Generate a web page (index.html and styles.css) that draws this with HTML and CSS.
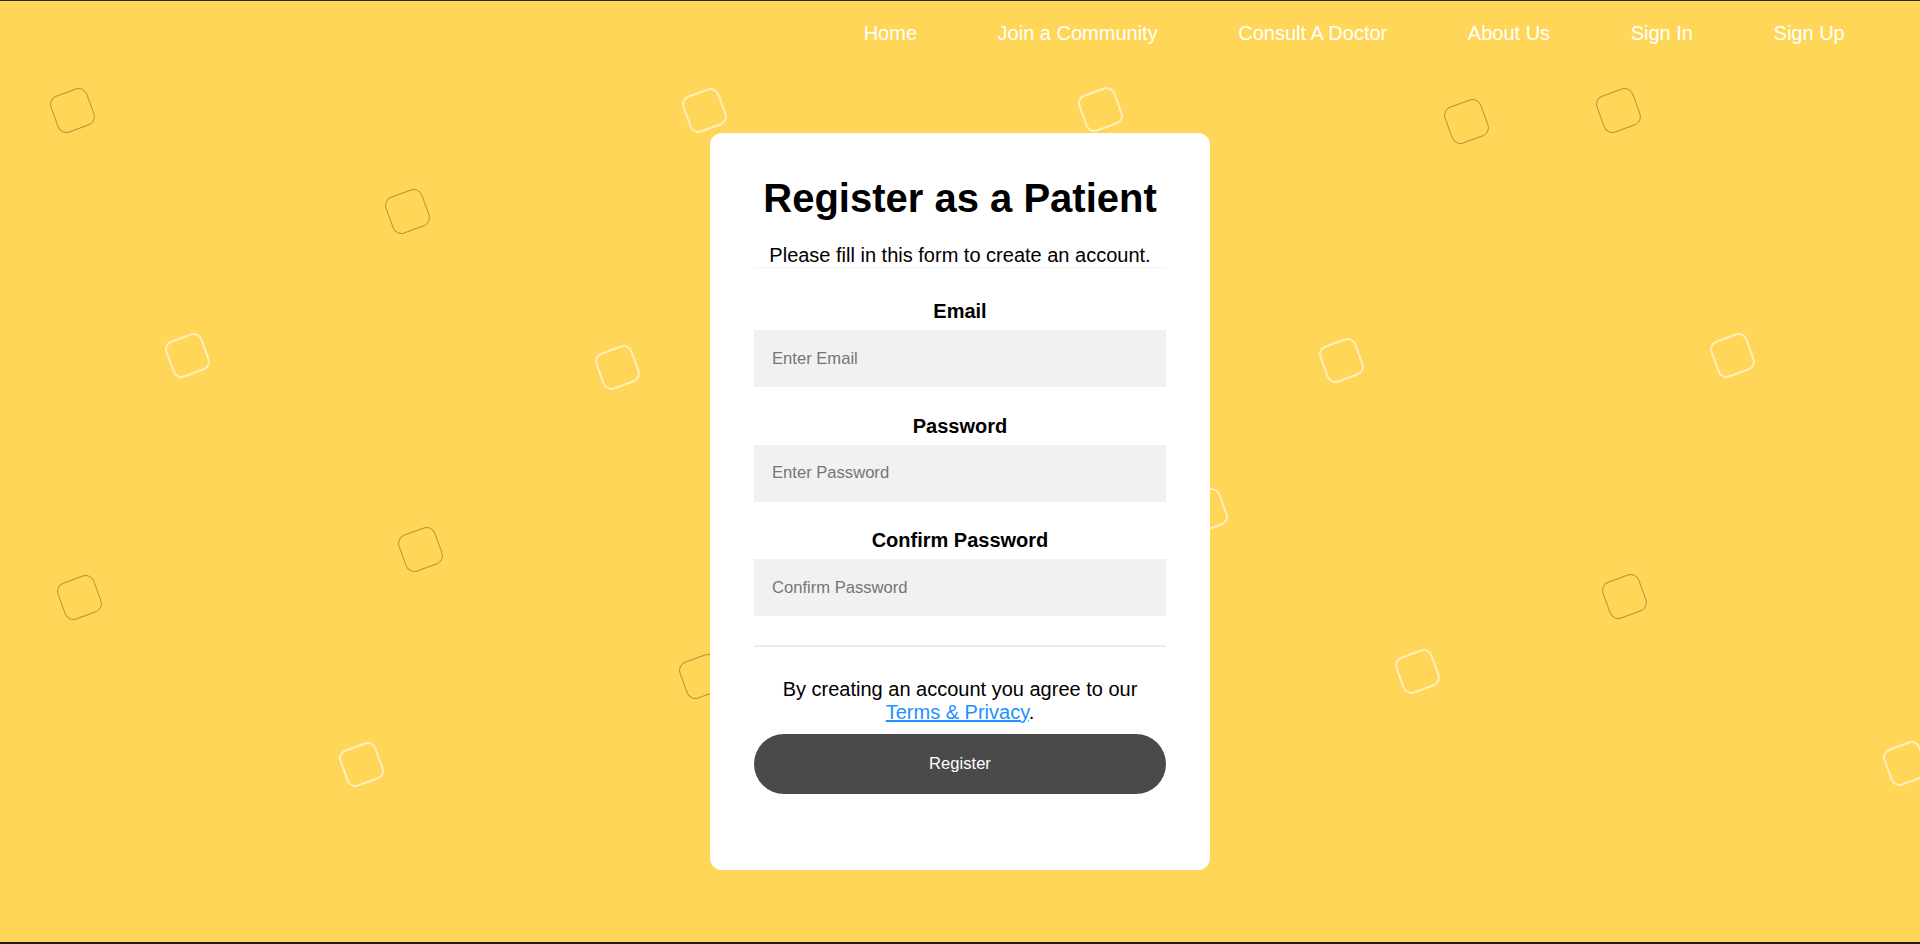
FILE: index.html
```html
<!DOCTYPE html>
<html lang="en">
<head>
<meta charset="utf-8">
<title>Register as a Patient</title>
<link rel="stylesheet" href="styles.css">
</head>
<body>
<div class="bg" aria-hidden="true">
  <span class="sq dark s1"></span>
  <span class="sq light s2"></span>
  <span class="sq light s3"></span>
  <span class="sq dark s4"></span>
  <span class="sq dark s5"></span>
  <span class="sq dark s6"></span>
  <span class="sq light s7"></span>
  <span class="sq light s8"></span>
  <span class="sq light s9"></span>
  <span class="sq light s10"></span>
  <span class="sq dark s11"></span>
  <span class="sq dark s12"></span>
  <span class="sq dark s13"></span>
  <span class="sq light s14"></span>
  <span class="sq dark s15"></span>
  <span class="sq light s16"></span>
  <span class="sq light s17"></span>
  <span class="sq light s18"></span>
</div>
<nav class="topnav">
  <ul class="nav-list">
    <li><a href="#">Home</a></li>
    <li><a href="#">Join a Community</a></li>
    <li><a href="#">Consult A Doctor</a></li>
    <li><a href="#">About Us</a></li>
    <li><a href="#">Sign In</a></li>
    <li><a href="#">Sign Up</a></li>
  </ul>
</nav>
<main class="main">
  <form class="card">
    <h1 class="title">Register as a Patient</h1>
    <p class="subtitle">Please fill in this form to create an account.</p>
    <hr class="rule-faint">
    <label class="field-label" for="email">Email</label>
    <input class="field" type="text" id="email" placeholder="Enter Email">
    <label class="field-label" for="psw">Password</label>
    <input class="field" type="password" id="psw" placeholder="Enter Password">
    <label class="field-label" for="psw-repeat">Confirm Password</label>
    <input class="field field-last" type="password" id="psw-repeat" placeholder="Confirm Password">
    <hr class="rule">
    <p class="terms">By creating an account you agree to our <a href="#">Terms &amp; Privacy</a>.</p>
    <button type="button" class="register-btn">Register</button>
  </form>
</main>
</body>
</html>
```
FILE: styles.css
```css
* { box-sizing: border-box; }

html { background: #1d1b12; }

body {
  margin: 0;
  height: 100vh;
  overflow: hidden;
  position: relative;
  background: #ffd658;
  border-top: 1px solid #2a2514;
  border-bottom: 2px solid #1d1b12;
  font-family: "Liberation Sans", Arial, sans-serif;
  color: #000;
}

/* decorative background squares */
.bg {
  position: absolute;
  inset: 0;
  overflow: hidden;
  z-index: 0;
}
.sq {
  position: absolute;
  width: 39px;
  height: 39px;
  border-radius: 9px;
  transform: rotate(-20deg);
}
.sq.dark { border: 1px solid rgba(60, 40, 0, 0.38); }
.sq.light { border: 2px solid rgba(255, 255, 255, 0.6); }

.s1 { left: 53px; top: 90px; }
.s2 { left: 685px; top: 90px; }
.s3 { left: 1081px; top: 89px; }
.s4 { left: 1447px; top: 101px; }
.s5 { left: 1599px; top: 90px; }
.s6 { left: 388px; top: 191px; }
.s7 { left: 168px; top: 335px; }
.s8 { left: 598px; top: 347px; }
.s9 { left: 1322px; top: 340px; }
.s10 { left: 1713px; top: 335px; }
.s11 { left: 401px; top: 529px; }
.s12 { left: 60px; top: 577px; }
.s13 { left: 1605px; top: 576px; }
.s14 { left: 1186px; top: 490px; }
.s15 { left: 682px; top: 656px; }
.s16 { left: 1398px; top: 651px; }
.s17 { left: 342px; top: 744px; }
.s18 { left: 1886px; top: 743px; }

/* navigation */
.topnav {
  position: relative;
  z-index: 1;
  padding: 21px 0 20px;
}
.nav-list {
  list-style: none;
  margin: 0;
  padding: 0 35px 0 0;
  display: flex;
  justify-content: flex-end;
}
.nav-list a {
  display: block;
  padding: 0 40.3px;
  color: #fff;
  text-decoration: none;
  font-size: 20px;
  line-height: 23px;
}

/* card */
.main {
  position: relative;
  z-index: 1;
  display: flex;
  justify-content: center;
  padding-top: 68px;
}
.card {
  width: 500px;
  background: #fff;
  border-radius: 12px;
  padding: 41px 44px 76px;
  text-align: center;
  display: flex;
  flex-direction: column;
}
.title {
  margin: 0;
  font-size: 40px;
  line-height: 48px;
  font-weight: bold;
}
.subtitle {
  margin: 22px 0 0;
  font-size: 20px;
  line-height: 23px;
}
.rule-faint {
  margin: 0 0 32px;
  border: 0;
  border-top: 1px solid #f4f4f4;
}
.field-label {
  display: block;
  font-size: 20px;
  line-height: 23px;
  font-weight: bold;
  margin-bottom: 7px;
}
.field {
  display: block;
  width: 100%;
  height: 57px;
  margin: 0 0 27.5px;
  padding: 0 18px;
  border: none;
  background: #f1f1f1;
  font-family: "Liberation Sans", Arial, sans-serif;
  font-size: 16.6px;
  color: #000;
  outline: none;
}
.field::placeholder { color: #757575; }
.field-last { margin-bottom: 28.7px; }
.rule {
  margin: 0;
  border: 0;
  border-top: 2px solid #ececec;
}
.terms {
  margin: 31px 0 0;
  font-size: 20px;
  line-height: 23px;
}
.terms a { color: dodgerblue; }
.register-btn {
  margin-top: 10.5px;
  width: 100%;
  height: 59.5px;
  border: none;
  border-radius: 30px;
  background: #4a4a4a;
  color: #fff;
  font-family: "Liberation Sans", Arial, sans-serif;
  font-size: 16.6px;
  cursor: pointer;
}
```
